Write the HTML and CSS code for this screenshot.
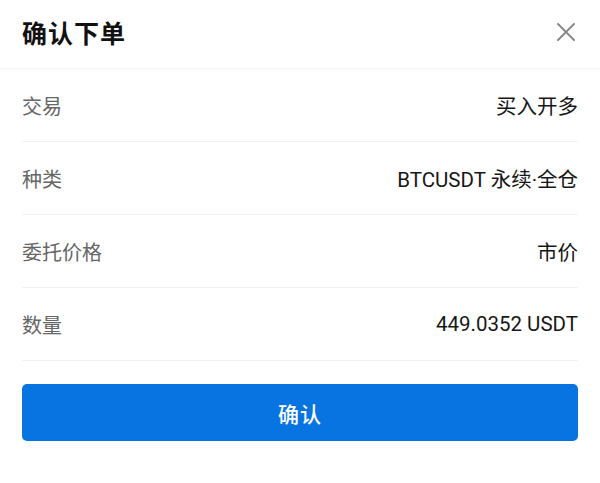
FILE: index.html
```html
<!DOCTYPE html>
<html lang="zh-CN">
<head>
<meta charset="utf-8">
<title>确认下单</title>
<link rel="stylesheet" href="styles.css">
</head>
<body>
<div class="sheet">
  <div class="header">
    <div class="title">确认下单</div>
    <svg class="close" width="20" height="20" viewBox="0 0 20 20" aria-hidden="true">
      <path d="M2 2 L18 18 M18 2 L2 18" stroke="#8a8a8a" stroke-width="2" fill="none" stroke-linecap="round"/>
    </svg>
  </div>
  <div class="rows">
    <div class="row"><span class="label">交易</span><span class="value">买入开多</span></div>
    <div class="row"><span class="label">种类</span><span class="value">BTCUSDT 永续·全仓</span></div>
    <div class="row"><span class="label">委托价格</span><span class="value">市价</span></div>
    <div class="row"><span class="label">数量</span><span class="value">449.0352 USDT</span></div>
  </div>
  <button class="confirm">确认</button>
</div>
</body>
</html>
```

FILE: styles.css
```css
html, body {
  margin: 0;
  padding: 0;
  background: #ffffff;
}
body {
  font-family: Roboto, "Noto Sans CJK SC", sans-serif;
  width: 600px;
  height: 483px;
  overflow: hidden;
}
.sheet {
  display: flex;
  flex-direction: column;
}
.header {
  height: 68px;
  padding: 0 24px 0 22px;
  display: flex;
  align-items: center;
  justify-content: space-between;
  border-bottom: 1px solid #f4f4f4;
}
.title {
  font-size: 25px;
  font-weight: 700;
  color: #111111;
  letter-spacing: 1px;
  margin-top: -4px;
}
.close {
  display: block;
  margin-top: -4px;
}
.rows {
  padding: 0 22px;
  display: flex;
  flex-direction: column;
}
.row {
  height: 72px;
  border-bottom: 1px solid #f1f1f1;
  display: flex;
  align-items: center;
  justify-content: space-between;
  font-size: 20px;
}
.label {
  color: #666666;
}
.value {
  color: #161616;
  font-size: 20.5px;
}
.confirm {
  margin: 23px 22px 0;
  height: 57px;
  border: none;
  border-radius: 5px;
  background: #0874e2;
  color: #ffffff;
  font-family: Roboto, "Noto Sans CJK SC", sans-serif;
  font-size: 21px;
  font-weight: 500;
  letter-spacing: 1px;
}
```
